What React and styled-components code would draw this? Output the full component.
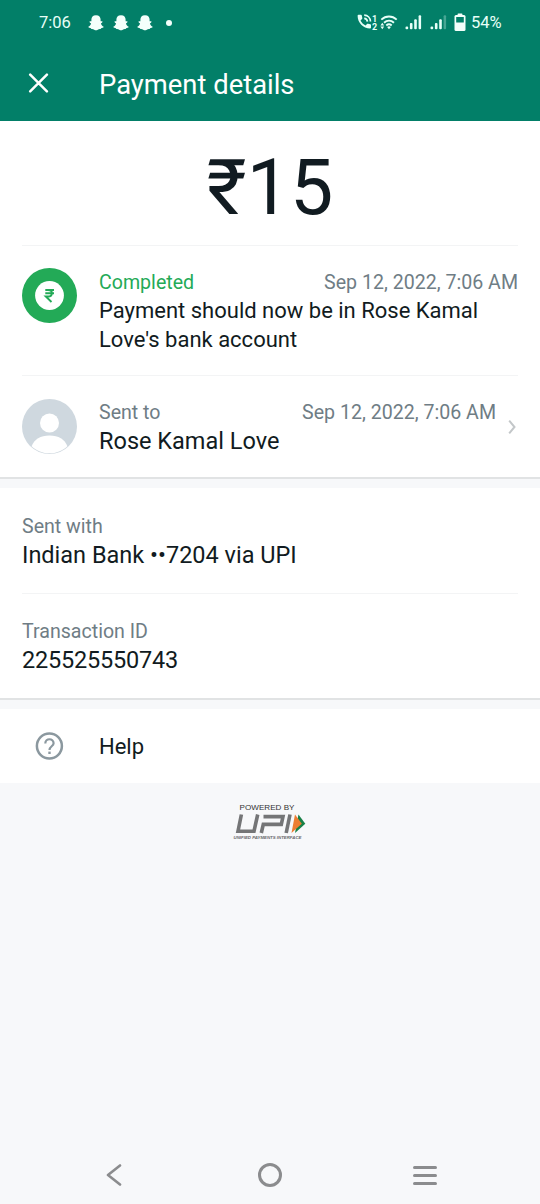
import React from "react";
import styled, { createGlobalStyle } from "styled-components";

const GlobalStyle = createGlobalStyle`
  * {
    box-sizing: border-box;
  }

  body {
    margin: 0;
    background: #f7f8fa;
    font-family: Roboto, "Liberation Sans", sans-serif;
  }

  svg {
    display: block;
    flex-shrink: 0;
  }
`;

const Ghost = () => (
  <svg width="16" height="16" viewBox="0 0 16 16" fill="#f4fffb">
    <path d="M8 .2C11.200 .2 12.600 2.200 12.600 4.600V6.200L14.300 6.200C14.900 7 13.900 7.900 12.900 8.500C13.300 10 14.400 11.100 15.700 11.700C15.500 12.700 14 13 13.100 13.200L12.700 14.100C11.500 13.900 10.600 14.200 9.800 14.700C8.600 15.400 7.400 15.400 6.200 14.700C5.400 14.200 4.500 13.900 3.300 14.100L2.900 13.200C2 13 .5 12.700 .3 11.700C1.600 11.100 2.700 10 3.100 8.500C2.100 7.900 1.100 7 1.700 6.200L3.400 6.200V4.600C3.400 2.200 4.800 .2 8 .2Z" />
  </svg>
);

const CallIcon = () => (
  <svg width="20" height="17" viewBox="0 0 20 17" fill="none">
    <path
      d="M.6 1.700C.6 1.200 1 .8 1.500 .8H4C4.400 .8 4.700 1.100 4.800 1.500L5.300 4C5.400 4.400 5.300 4.700 5 5L3.500 6.400C4.700 8.700 6.300 10.300 8.600 11.500L10 10C10.300 9.700 10.600 9.600 11 9.700L13.300 10.200C13.700 10.300 14 10.600 14 11V13.500C14 14 13.600 14.400 13.100 14.400C6.100 14.400 .6 8.700 .6 1.700Z"
      fill="#e8fff8"
    />
    <path
      d="M7.200 1.200C10.700 1.300 13.400 4 13.500 7.600M7.200 4.300C9 4.400 10.300 5.700 10.400 7.600"
      stroke="#e8fff8"
      strokeWidth="1.700"
    />
  </svg>
);

const WifiIcon = () => (
  <svg width="18" height="15" viewBox="0 0 18 15" fill="none">
    <g stroke="#e8fff8" strokeWidth="1.900">
      <path d="M1.300 4.600C5.800 .4 12.200 .4 16.700 4.600" />
      <path d="M4 7.700C7 5 11 5 14 7.700" />
      <path d="M6.300 10.500C7.900 9.100 10.100 9.100 11.700 10.500" />
    </g>
    <path d="M9 14.200L7.100 12Q9 10.700 10.900 12Z" fill="#e8fff8" />
    <path d="M.4 10.400L2.300 7.800L4.200 10.400ZM.4 11.600L2.300 14.200L4.200 11.600Z" fill="#e8fff8" />
  </svg>
);

const SignalIcon = ({ weak }) => (
  <svg width="17" height="15" viewBox="0 0 17 15" fill="#e8fff8">
    <rect x=".5" y="11.500" width="2.700" height="2.700" rx="1" />
    <rect x="4.900" y="8" width="2.600" height="6.200" rx="1" />
    <rect x="9.200" y="4.200" width="2.600" height="10" rx="1" />
    <rect x="13.600" y=".3" width="2.500" height="13.900" rx="1" opacity={weak ? 0.3 : 1} />
  </svg>
);

const BatteryIcon = () => (
  <svg width="12" height="19" viewBox="0 0 12 19">
    <rect x="3.600" y=".4" width="4.800" height="3" rx=".7" fill="#f4fffb" />
    <rect x=".5" y="2" width="11" height="16" rx="1.500" fill="#f4fffb" />
    <rect x="2.200" y="4" width="7.600" height="5.500" fill="#027f68" />
  </svg>
);

const CloseIcon = () => (
  <svg width="21" height="20" viewBox="0 0 21 20">
    <path d="M2.200 1.700L18.900 18.300M18.900 1.700L2.200 18.300" stroke="#fff" strokeWidth="2.500" strokeLinecap="round" />
  </svg>
);

const RupeeIcon = () => (
  <svg width="55" height="55" viewBox="0 0 55 55">
    <circle cx="27.500" cy="27.500" r="27.500" fill="#23aa57" />
    <circle cx="27.500" cy="27.500" r="14.400" fill="#fff" />
    <path
      d="M23.300 22H32M23.300 25.200H32M23.300 22H26C31.200 22 31.200 28.500 26 28.500H23.800L29.500 34"
      fill="none"
      stroke="#23aa57"
      strokeWidth="1.900"
    />
  </svg>
);

const PersonIcon = () => (
  <svg width="55" height="55" viewBox="0 0 55 55">
    <circle cx="27.500" cy="27.500" r="27.500" fill="#cfd8df" />
    <circle cx="27.500" cy="24" r="9.500" fill="#fff" />
    <path d="M9.600 47.200C12.500 40.500 18.300 36.600 27.500 36.600S42.500 40.500 45.400 47.200C35.500 56.700 19.500 56.700 9.600 47.200Z" fill="#fff" />
  </svg>
);

const ChevronIcon = () => (
  <svg width="8" height="14" viewBox="0 0 8 14" fill="none">
    <path d="M1.200 .7L6.500 7L1.200 13.300" stroke="#c3c7c9" strokeWidth="2" />
  </svg>
);

const HelpIcon = () => (
  <svg width="29" height="28" viewBox="0 0 29 28" fill="none" stroke="#8b989f">
    <circle cx="14.400" cy="14" r="12.500" strokeWidth="2.500" />
    <path d="M10.300 11.400C10.300 5.900 18.600 5.900 18.600 11.200C18.600 14.300 14.500 14.300 14.500 18" strokeWidth="2.200" />
    <path d="M13.300 20.800H15.700" strokeWidth="2.400" />
  </svg>
);

const UpiMark = () => (
  <svg width="72" height="22" viewBox="0 0 72 22" fill="none">
    <g stroke="#747577" strokeWidth="3.600">
      <path d="M7.400 1.500L4 18.200H20L23.700 1.500" />
      <path d="M27.300 20L29.300 11.400H47.300L49 3.600H29.500" />
      <path d="M56 1.500L52.200 20" />
    </g>
    <path d="M64.500 1.500L71.300 10.800L61 20Z" fill="#188047" />
    <path d="M61 1.500L67.800 10.800L57.500 20Z" fill="#ed7d32" />
  </svg>
);

const BackIcon = () => (
  <svg width="16" height="22" viewBox="0 0 16 22" fill="none">
    <path d="M14 1.500L2 11L14 20.500" stroke="#8b8c8e" strokeWidth="2.600" strokeLinecap="round" strokeLinejoin="round" />
  </svg>
);

const App = () => (
  <Screen>
    <GlobalStyle />
    <Header>
      <StatusBar>
        <Clock>7:06</Clock>
        <Notifications>
          <Ghost />
          <Ghost />
          <Ghost />
          <Dot />
        </Notifications>
        <StatusIcons>
          <CallIcon />
          <SimNumbers>
            <span>1</span>
            <span>2</span>
          </SimNumbers>
          <WifiIcon />
          <SignalSlot>
            <SignalIcon />
            <SignalIcon weak />
          </SignalSlot>
          <BatteryIcon />
        </StatusIcons>
        <Battery>54%</Battery>
      </StatusBar>
      <TitleBar>
        <CloseIcon />
        <Title>Payment details</Title>
      </TitleBar>
    </Header>

    <Card>
      <Amount>₹15</Amount>
      <Divider />
      <EventRow height={129} top={22}>
        <RupeeIcon />
        <EventBody top={1}>
          <LabelLine>
            <Label green>Completed</Label>
            <Label>Sep 12, 2022, 7:06 AM</Label>
          </LabelLine>
          <Message>Payment should now be in Rose Kamal Love's bank account</Message>
        </EventBody>
      </EventRow>
      <Divider />
      <EventRow height={101} top={23}>
        <PersonIcon />
        <EventBody>
          <LabelLine>
            <Label>Sent to</Label>
            <Label>Sep 12, 2022, 7:06 AM</Label>
          </LabelLine>
          <Value>Rose Kamal Love</Value>
        </EventBody>
        <ChevronSlot>
          <ChevronIcon />
        </ChevronSlot>
      </EventRow>
    </Card>
    <Gap />

    <Card>
      <Field height={105} top={25}>
        <Label>Sent with</Label>
        <Value>Indian Bank ••7204 via UPI</Value>
      </Field>
      <Divider />
      <Field height={104} top={24}>
        <Label>Transaction ID</Label>
        <Value tight>225525550743</Value>
      </Field>
    </Card>
    <Gap />

    <HelpRow>
      <HelpIcon />
      <Message>Help</Message>
    </HelpRow>

    <Footer>
      <PoweredBy>POWERED BY</PoweredBy>
      <UpiMark />
      <Tagline>UNIFIED PAYMENTS INTERFACE</Tagline>
    </Footer>

    <NavBar>
      <BackIcon />
      <HomeButton />
      <MenuButton>
        <i />
        <i />
        <i />
      </MenuButton>
    </NavBar>
  </Screen>
);

const Screen = styled.div`
  display: flex;
  flex-direction: column;
  width: 540px;
  height: 1204px;
  overflow: hidden;
  background: #f7f8fa;
  color: #111b21;
`;

const Header = styled.header`
  height: 121px;
  background: #027f68;
  color: #fff;
`;

const StatusBar = styled.div`
  display: flex;
  align-items: center;
  height: 45px;
  padding: 0 38px 0 39px;
`;

const Clock = styled.span`
  width: 49px;
  font-size: 16.5px;
  color: #e8fff8;
`;

const Notifications = styled.div`
  display: flex;
  align-items: center;
  gap: 8.5px;
`;

const Dot = styled.i`
  width: 6px;
  height: 6px;
  margin-left: 4px;
  border-radius: 50%;
  background: #f4fffb;
`;

const StatusIcons = styled.div`
  display: flex;
  align-items: center;
  margin-left: auto;
`;

const SimNumbers = styled.div`
  display: flex;
  flex-direction: column;
  width: 8px;
  margin-left: -5px;
  font-size: 9px;
  font-weight: 700;
  line-height: 8px;
  color: #e8fff8;
`;

const SignalSlot = styled.div`
  display: flex;
  gap: 8px;
  margin: 0 7px;
`;

const Battery = styled.span`
  width: 31px;
  margin-left: 5px;
  font-size: 16.5px;
  color: #e8fff8;
`;

const TitleBar = styled.div`
  display: flex;
  align-items: center;
  height: 76px;
  padding: 0 29px 0 28px;
`;

const Title = styled.h1`
  margin: 3px 0 0 50px;
  font-size: 27.4px;
  font-weight: 400;
  line-height: 34px;
`;

const Card = styled.section`
  background: #fff;
`;

const Amount = styled.div`
  height: 124px;
  padding-top: 3px;
  font-size: 77px;
  line-height: 128px;
  text-align: center;
`;

const Divider = styled.div`
  height: 1px;
  margin: 0 22px;
  background: #f3f4f5;
`;

const EventRow = styled.div`
  display: flex;
  height: ${props => props.height}px;
  padding: ${props => props.top}px 22px 0;
`;

const EventBody = styled.div`
  flex: 1;
  margin-left: 22px;
  padding-top: ${props => props.top || 0}px;
`;

const LabelLine = styled.div`
  display: flex;
  justify-content: space-between;
`;

const Label = styled.div`
  font-size: 19.6px;
  line-height: 27px;
  color: ${props => (props.green ? "#23aa57" : "#6f7d85")};
`;

const Message = styled.div`
  font-size: 22px;
  line-height: 29px;
`;

const Value = styled.div`
  font-size: 23.5px;
  line-height: 31px;
  letter-spacing: ${props => (props.tight ? "-0.2px" : "normal")};
`;

const ChevronSlot = styled.div`
  display: flex;
  width: 22px;
  height: 55px;
  padding-left: 12px;
  align-items: center;
`;

const Gap = styled.div`
  height: 11px;
  border-top: 2px solid #e1e3e4;
  background: #f7f8fa;
`;

const Field = styled.div`
  height: ${props => props.height}px;
  padding: ${props => props.top}px 22px 0;
`;

const HelpRow = styled.div`
  display: flex;
  gap: 35px;
  align-items: center;
  height: 74px;
  padding: 0 35px;
  background: #fff;
`;

const Footer = styled.footer`
  display: flex;
  flex-direction: column;
  align-items: center;
  padding-top: 20px;
`;

const PoweredBy = styled.div`
  padding-right: 6px;
  font-family: "Liberation Sans", Arial, sans-serif;
  font-size: 8.1px;
  line-height: 10px;
  color: #333;
`;

const Tagline = styled.div`
  padding-right: 5px;
  font-family: "Liberation Sans", Arial, sans-serif;
  font-size: 4.35px;
  font-style: italic;
  font-weight: 700;
  line-height: 6px;
  color: #66676a;
`;

const NavBar = styled.nav`
  display: flex;
  align-items: center;
  height: 58px;
  margin-top: auto;
  padding: 0 103px 0 106px;
`;

const HomeButton = styled.span`
  width: 24px;
  height: 24px;
  margin: 0 auto 0 136px;
  border: 3px solid #8b8c8e;
  border-radius: 50%;
`;

const MenuButton = styled.span`
  display: flex;
  flex-direction: column;
  gap: 5px;
  width: 24px;

  i {
    height: 3px;
    border-radius: 2px;
    background: #8b8c8e;
  }
`;

export default App;
